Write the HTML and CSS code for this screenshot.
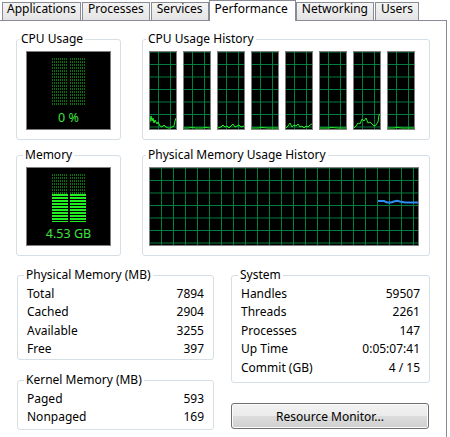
FILE: index.html
```html
<!DOCTYPE html>
<html lang="en">
<head>
    <meta charset="UTF-8">
    <title>Windows Task Manager - Performance</title>
    <link rel="stylesheet" href="styles.css">
</head>
<body>
<div class="window">
    <div class="tabs">
        <div class="tab">Applications</div>
        <div class="tab">Processes</div>
        <div class="tab">Services</div>
        <div class="tab tab--active">Performance</div>
        <div class="tab">Networking</div>
        <div class="tab">Users</div>
    </div>
    <div class="panel">
        <div class="row">
            <section class="group group--meter">
                <div class="group__title group__title--near">CPU Usage</div>
                <div class="meter">
                    <div class="meter__bars">
                        <div class="meter__col"><div class="meter__fill" style="height: 0%"></div></div>
                        <div class="meter__col"><div class="meter__fill" style="height: 0%"></div></div>
                    </div>
                    <div class="meter__value">0 %</div>
                </div>
            </section>
            <section class="group group--history">
                <div class="group__title">CPU Usage History</div>
                <div class="graphs">
                    <svg class="graph graph--core" viewBox="0 0 26 77"><polyline class="graph__line" points="0,70 1,64 2,69 3,66 4,71 5,68 6,70 7,72 8,70 10,74 12,75 14,73 16,75 18,76 20,76 22,75 24,74 25,69 26,66"/></svg>
                    <svg class="graph graph--core" viewBox="0 0 26 77"><polyline class="graph__line" points="0,76 4,76 8,75.5 12,76 18,76 22,75.5 26,76"/></svg>
                    <svg class="graph graph--core" viewBox="0 0 26 77"><polyline class="graph__line" points="0,76 3,75 5,73 7,75 9,74 11,76 13,74 15,72 17,75 19,74 21,73 23,75 26,74"/></svg>
                    <svg class="graph graph--core" viewBox="0 0 26 77"><polyline class="graph__line" points="0,76 6,76 10,75.5 16,76 26,76"/></svg>
                    <svg class="graph graph--core" viewBox="0 0 26 77"><polyline class="graph__line" points="0,76 2,74 4,71 6,75 8,73 10,74 12,72 14,75 16,74 18,76 20,74 22,75 24,73 26,72"/></svg>
                    <svg class="graph graph--core" viewBox="0 0 26 77"><polyline class="graph__line" points="0,76 8,76 12,75.5 18,76 26,76"/></svg>
                    <svg class="graph graph--core" viewBox="0 0 26 77"><polyline class="graph__line" points="0,76 2,74 4,71 6,72 8,67 10,69 12,66 14,71 16,70 18,72 20,74 22,73 24,70 25,63 26,62"/></svg>
                    <svg class="graph graph--core" viewBox="0 0 26 77"><polyline class="graph__line" points="0,76 5,76 9,75.5 14,76 26,76"/></svg>
                </div>
            </section>
        </div>
        <div class="row">
            <section class="group group--meter">
                <div class="group__title group__title--far">Memory</div>
                <div class="meter">
                    <div class="meter__bars">
                        <div class="meter__col"><div class="meter__fill" style="height: 59%"></div></div>
                        <div class="meter__col"><div class="meter__fill" style="height: 59%"></div></div>
                    </div>
                    <div class="meter__value">4.53 GB</div>
                </div>
            </section>
            <section class="group group--history">
                <div class="group__title">Physical Memory Usage History</div>
                <div class="graphs">
                    <svg class="graph graph--memory" viewBox="0 0 268 77"><polyline class="graph__line graph__line--memory" points="228,33 234,33 237,34.5 241,34.5 244,33.5 247,32.8 250,33.5 255,34.5 262,34.5 268,34.5"/></svg>
                </div>
            </section>
        </div>
        <div class="bottom">
            <div class="column">
                <section class="group">
                    <div class="group__title group__title--far">Physical Memory (MB)</div>
                    <div class="stats">
                        <div class="stat"><span>Total</span><span>7894</span></div>
                        <div class="stat"><span>Cached</span><span>2904</span></div>
                        <div class="stat"><span>Available</span><span>3255</span></div>
                        <div class="stat"><span>Free</span><span>397</span></div>
                    </div>
                </section>
                <section class="group group--kernel">
                    <div class="group__title group__title--far">Kernel Memory (MB)</div>
                    <div class="stats">
                        <div class="stat"><span>Paged</span><span>593</span></div>
                        <div class="stat"><span>Nonpaged</span><span>169</span></div>
                    </div>
                </section>
            </div>
            <div class="column">
                <section class="group group--system">
                    <div class="group__title group__title--far">System</div>
                    <div class="stats">
                        <div class="stat"><span>Handles</span><span>59507</span></div>
                        <div class="stat"><span>Threads</span><span>2261</span></div>
                        <div class="stat"><span>Processes</span><span>147</span></div>
                        <div class="stat"><span>Up Time</span><span>0:05:07:41</span></div>
                        <div class="stat"><span>Commit (GB)</span><span>4 / 15</span></div>
                    </div>
                </section>
                <button class="button">Resource Monitor...</button>
            </div>
        </div>
    </div>
</div>
</body>
</html>
```

FILE: styles.css
```css
* {
    box-sizing: border-box;
}
html, body {
    margin: 0;
    padding: 0;
    height: 100%;
}
body {
    background-color: #fff;
    font-family: "Noto Sans", "Open Sans", sans-serif;
    font-size: 12px;
    color: #000;
}
.window {
    width: 447px;
    height: 437px;
    display: flex;
    flex-direction: column;
}

/* tab strip */
.tabs {
    display: flex;
    align-items: flex-end;
    gap: 1px;
    height: 21px;
    padding-left: 2px;
    border-bottom: 1px solid #898c95;
}
.tab {
    height: 18px;
    padding: 0 5px;
    line-height: 12px;
    border: 1px solid #898c95;
    border-bottom: none;
    background-image: linear-gradient(to bottom, #f4f4f4 0%, #e4e4e4 100%);
    white-space: nowrap;
}
.tab:first-child {
    padding: 0 4px;
}
.tab--active {
    height: 21px;
    margin: 0 -1px -1px -1px;
    padding: 0 7px 0 5px;
    line-height: 15px;
    background: #fff;
}

.panel {
    flex: 1;
    padding: 18px 0 0 16px;
    border-right: 1px solid #898c95;
}
.row {
    display: grid;
    grid-template-columns: 105px 288px;
    column-gap: 21px;
}
.row + .row {
    margin-top: 15px;
}

/* group boxes */
.group {
    border: 1px solid #d5dfe5;
    border-radius: 3px;
}
.group__title {
    width: max-content;
    margin: -9px 0 0 3px;
    padding: 0 2px;
    line-height: 16px;
    background-color: #fff;
}
.group__title--near {
    margin-left: 2px;
}
.group__title--far {
    margin-left: 6px;
}
.group--meter,
.group--history {
    padding-bottom: 9px;
}

/* meters */
.meter {
    height: 79px;
    margin: 4px 9px 0;
    padding-top: 6px;
    display: flex;
    flex-direction: column;
    align-items: center;
    background-color: #000;
    border: 1px solid #7f7f7f;
}
.meter__bars {
    display: flex;
    gap: 2px;
    height: 48px;
}
.meter__col {
    width: 16px;
    display: flex;
    flex-direction: column;
    justify-content: flex-end;
    background-image:
        repeating-linear-gradient(to right, transparent 0 1px, #000 1px 2px),
        repeating-linear-gradient(to bottom, #0a6f0e 0 2px, #000 2px 3px);
}
.meter__fill {
    background-image: repeating-linear-gradient(to bottom, #22f022 0 2px, #000 2px 3px);
}
.meter__value {
    margin-top: 4px;
    font-size: 12.5px;
    line-height: 16px;
    color: #3fe33f;
}

/* history graphs */
.graphs {
    display: flex;
    gap: 6px;
    margin: 4px 0 0 6px;
}
.graph {
    display: block;
    height: 79px;
    border: 1px solid #808080;
    background-color: #000;
    background-image:
        linear-gradient(to right, #008040 1px, transparent 1px),
        linear-gradient(to bottom, #008040 1px, transparent 1px);
    background-size: 12px 12.5px;
    background-position: 8px 12px;
}
.graph--core {
    width: 28px;
}
.graph--memory {
    width: 270px;
    background-position: 11px 12px;
}
.graph__line {
    fill: none;
    stroke: #22f022;
    stroke-width: 1;
}
.graph__line--memory {
    stroke: #2c8cf0;
    stroke-width: 2;
}

/* numbers at the bottom */
.bottom {
    display: grid;
    grid-template-columns: 197px 199px;
    column-gap: 17px;
    align-items: start;
    margin: 19px 0 0 1px;
}
.column {
    display: flex;
    flex-direction: column;
    gap: 20px;
}
.group--system {
    padding-bottom: 5px;
}
.group--kernel {
    padding-bottom: 3px;
}
.stats {
    margin-top: 2px;
    padding: 0 9px;
}
.stat {
    display: flex;
    justify-content: space-between;
    line-height: 18.4px;
}

.button {
    width: 198px;
    height: 26px;
    padding: 0;
    font: inherit;
    color: #000;
    border: 1px solid #707070;
    border-radius: 3px;
    box-shadow: inset 0 0 0 1px #fbfbfb;
    background-image: linear-gradient(to bottom, #f2f2f2 0%, #ebebeb 50%, #dddddd 50%, #cfcfcf 100%);
}
```
